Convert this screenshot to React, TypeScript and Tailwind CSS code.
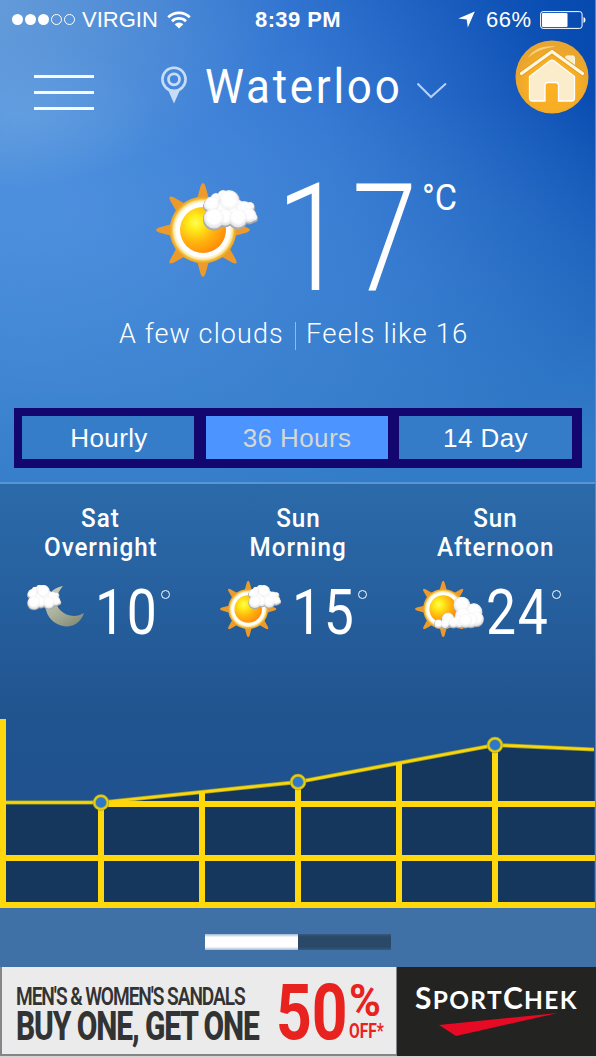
import React from "react";

const RAYS = [0, 45, 90, 135, 180, 225, 270, 315];

function Puffs({ id, puffs }: { id: string; puffs: number[][] }) {
  return (
    <g>
      {puffs.map(([x, y, r], i) => (
        <circle key={`e${i}`} cx={x} cy={y + 0.4} r={r} fill="#a9abae" />
      ))}
      {puffs.map(([x, y, r], i) => (
        <circle key={`b${i}`} cx={x} cy={y - 0.5} r={r - 1} fill="#e6e6e8" />
      ))}
      {puffs.map(([x, y, r], i) => (
        <circle key={`p${i}`} cx={x} cy={y - 0.8} r={r - 0.8} fill={`url(#${id}-puff)`} />
      ))}
    </g>
  );
}

function PuffGradient({ id }: { id: string }) {
  return (
    <radialGradient id={`${id}-puff`} cx="0.5" cy="0.44" r="0.56">
      <stop offset="0" stopColor="#ffffff" />
      <stop offset="0.6" stopColor="#ffffff" stopOpacity="0.95" />
      <stop offset="0.85" stopColor="#eeeef0" stopOpacity="0.5" />
      <stop offset="1" stopColor="#d8d9dc" stopOpacity="0.1" />
    </radialGradient>
  );
}

const SMALL_CLOUD = [
  [69, 30, 12], [80, 27, 10], [60, 17, 6], [98, 36, 4], [94, 25, 5], [52, 24, 5], [67, 14, 6],
  [56, 23, 8.5], [88, 28, 9], [93, 34, 8], [69, 36, 9], [73, 19, 11], [82, 37, 10], [58, 37, 11],
];

const BIG_CLOUD = [
  [78, 42, 14.5], [98, 53, 14.5], [102, 65, 13], [80, 60, 14], [93, 67, 12.5],
  [74, 69, 11], [84, 68, 12], [55, 65, 11], [64, 71, 9], [39, 73, 7.5], [50, 73, 8],
];

function SunIcon({ id, cloud, className }: { id: string; cloud: "small" | "big"; className: string }) {
  return (
    <svg viewBox="0 0 120 96" className={className} aria-hidden="true">
      <defs>
        <radialGradient id={`${id}-core`} cx="0.34" cy="0.34" r="0.72">
          <stop offset="0" stopColor="#fffb5a" />
          <stop offset="0.2" stopColor="#ffee1c" />
          <stop offset="0.58" stopColor="#ffb60e" />
          <stop offset="1" stopColor="#ff8a0a" />
        </radialGradient>
        <radialGradient id={`${id}-halo`}>
          <stop offset="0.8" stopColor="#fff" />
          <stop offset="0.88" stopColor="#fbe7a0" />
          <stop offset="0.94" stopColor="#f0b52c" />
          <stop offset="1" stopColor="#ec9f28" />
        </radialGradient>
        <PuffGradient id={id} />
      </defs>
      {RAYS.map((a) => (
        <path key={a} d="M39.500 22 Q42.500 12 44.600 4 Q47 -2 49.400 4 Q51.500 12 54.500 22Z" fill="#ec9a2b" transform={`rotate(${a} 47 48)`} />
      ))}
      <circle cx="47" cy="48" r="33.4" fill={`url(#${id}-halo)`} />
      <circle cx="47" cy="48" r="23" fill={`url(#${id}-core)`} />
      {cloud === "small" ? <Puffs id={id} puffs={SMALL_CLOUD} /> : <Puffs id={id} puffs={BIG_CLOUD} />}
    </svg>
  );
}

function MoonIcon({ className }: { className: string }) {
  return (
    <svg viewBox="0 0 60 46" className={className} aria-hidden="true">
      <defs>
        <linearGradient id="moon-body" x1="0" y1="0" x2="0.6" y2="1">
          <stop offset="0" stopColor="#d0d2c4" />
          <stop offset="0.6" stopColor="#abb19c" />
          <stop offset="1" stopColor="#8a927c" />
        </linearGradient>
        <PuffGradient id="moon" />
      </defs>
      <path d="M38 1 C26 3.500 18 13 21 25 C24 36.500 34 41.500 42.500 41.500 C50.500 41 56.500 35.500 59 28 C51 33 41.500 31.500 35 25 C29 18.500 31 9 38 1Z" fill="url(#moon-body)" />
      <g transform="translate(-27 -5.200) scale(0.62 0.63)">
        <Puffs id="moon" puffs={SMALL_CLOUD} />
      </g>
    </svg>
  );
}

function StatusBar() {
  return (
    <div className="flex h-[39px] items-center pl-3 pr-[9px] font-['Liberation_Sans',sans-serif] text-[22px] leading-[39px] text-white">
      <div className="flex w-[243px] items-center">
        <div className="flex w-[70px] gap-[2.6px]">
          {[1, 1, 1, 0, 0].map((on, i) => (
            <span key={i} className={on ? "size-[10.5px] rounded-full bg-white" : "size-[10.5px] rounded-full border border-white"} />
          ))}
        </div>
        <span className="w-[85px] whitespace-nowrap">VIRGIN</span>
        <svg viewBox="0 0 24 18" className="h-[18px] w-6" aria-hidden="true">
          <path d="M1.2 6.2a15.500 15.500 0 0 1 21.600 0M5 10.300a10 10 0 0 1 14 0" fill="none" stroke="#fff" strokeWidth="2.700" />
          <path d="M7.700 13.300a6 6 0 0 1 8.600 0L12 17.600Z" fill="#fff" />
        </svg>
      </div>
      <span className="w-[203px] whitespace-nowrap font-bold tracking-[0.4px]">8:39 PM</span>
      <svg viewBox="0 0 17 17" className="mr-[11px] size-[17px]" aria-hidden="true">
        <path d="M16.800 .5 9.800 16.500 8.700 8.600 .3 7.600Z" fill="#fff" />
      </svg>
      <span className="w-[54px] whitespace-nowrap tracking-[0.5px]">66%</span>
      <svg viewBox="0 0 46 18" className="h-[18px] w-[46px] shrink-0" aria-hidden="true">
        <rect x=".6" y=".6" width="41.500" height="16.800" rx="2.500" fill="none" stroke="#fff" strokeWidth="1" />
        <rect x="2" y="2" width="25.500" height="14" rx="1" fill="#fff" />
        <path d="M43.500 6q2 .6 2 3t-2 3Z" fill="#fff" />
      </svg>
    </div>
  );
}

function HomeIcon() {
  return (
    <svg viewBox="0 0 74 74" className="size-[74px]" aria-hidden="true">
      <defs>
        <radialGradient id="home-bg" cx="0.5" cy="0.6" r="0.5">
          <stop offset="0" stopColor="#fdb022" />
          <stop offset="0.7" stopColor="#f7ae25" />
          <stop offset="1" stopColor="#e9a52e" />
        </radialGradient>
      </defs>
      <circle cx="37" cy="37" r="36.500" fill="url(#home-bg)" />
      <path d="M13 18C17 10 27 5 41 6.500 29 8 21 11 13 18Z" fill="#fbd27c" />
      <path d="M50.500 20v-2.500q0-1.500 1.500-1.500h6q1.500 0 1.500 1.500V28Z" fill="#fbedc9" stroke="#fff8e4" strokeWidth="1" />
      <path d="M14.500 36.500 35 20.800q2-1.500 4 0L59.500 36.500V58q0 3-3 3H43.500V45.500q0-3-3-3h-7.500q-3 0-3 3V61H17.500q-3 0-3-3Z" fill="#fbedcb" stroke="#fff" strokeWidth="1.300" />
      <path d="M6.500 33.500 37 11.500 67.500 33.500" fill="none" stroke="#e79c1c" strokeWidth="5" strokeLinecap="round" strokeLinejoin="round" />
      <path d="M6.500 33.500 37 11.500 67.500 33.500" fill="none" stroke="#fff8e4" strokeWidth="3.200" strokeLinecap="round" strokeLinejoin="round" />
    </svg>
  );
}

function Header() {
  return (
    <header className="flex h-[91px] items-start pl-[34px]">
      <button aria-label="Menu" className="mt-9 flex w-[127px] flex-col gap-[13px]">
        <span className="h-[3px] w-[60px] bg-white/95" />
        <span className="h-[3px] w-[60px] bg-white/95" />
        <span className="h-[3px] w-[60px] bg-white/95" />
      </button>
      <svg viewBox="0 0 26 38" className="mt-[27px] h-[38px] w-[26px]" aria-hidden="true">
        <circle cx="13" cy="13.300" r="11.600" fill="none" stroke="#c7dcf6" strokeWidth="2.600" />
        <circle cx="13" cy="13.300" r="5.500" fill="none" stroke="#c7dcf6" strokeWidth="2.800" />
        <path d="M6.800 23.500q6.200 2.500 12.400 0L13 37.500Z" fill="#c7dcf6" />
      </svg>
      <h1 className="ml-[18px] mt-[19px] w-[212px] whitespace-nowrap text-[48px] leading-[58px] tracking-[3px] text-white">
        <span className="inline-block origin-left scale-x-[0.915]">Waterloo</span>
      </h1>
      <svg viewBox="0 0 32 18" className="mt-[43px] h-[18px] w-8" aria-hidden="true">
        <path d="M.5 1.500 14 15 29 1.500" fill="none" stroke="#b9d0f3" strokeWidth="2" />
      </svg>
      <div className="ml-[66px] mt-[1px]">
        <HomeIcon />
      </div>
    </header>
  );
}

function Current() {
  return (
    <section className="flex h-[278px] flex-col">
      <div className="flex h-[185px] pl-[156px] pt-[52px]">
        <SunIcon id="now" cloud="small" className="h-24 w-[120px] shrink-0" />
        <div className="mt-[-3px] flex w-[146px] shrink-0 whitespace-nowrap text-[150px] font-light leading-[121px] text-white">
          <span className="inline-block w-[76px] origin-left scale-x-[0.850]">1</span>
          <span className="inline-block w-[70px] origin-left scale-x-[0.780]">7</span>
        </div>
        <span className="whitespace-nowrap text-[36px] leading-[33px] text-white">
          <span className="inline-block origin-left scale-x-[0.950]">°C</span>
        </span>
      </div>
      <p className="flex h-[38px] items-center pl-[119px] text-[28.500px] font-[350] leading-[40px] tracking-[1.200px] text-white">
        <span className="w-[176px] whitespace-nowrap"><span className="inline-block origin-left scale-x-[0.945]">A few clouds</span></span>
        <span className="mr-[10px] mt-1 h-7 w-px bg-[#8fb9ea]" />
        <span className="whitespace-nowrap"><span className="inline-block origin-left scale-x-[0.965]">Feels like 16</span></span>
      </p>
    </section>
  );
}

function Tabs() {
  return (
    <nav className="ml-[14px] flex h-[60px] w-[568px] bg-[#13066f] pb-[9px] pl-2 pt-2 font-['Liberation_Sans',sans-serif] text-[26px] leading-[44px] tracking-[0.400px] text-white">
      <button className="w-[172px] bg-[#367dc9] pl-[2px]">Hourly</button>
      <button className="ml-3 w-[182px] bg-[#4c94ff] text-[#d3d8d3]">36 Hours</button>
      <button className="ml-[11px] w-[173px] bg-[#347bc8]">14 Day</button>
    </nav>
  );
}

const PERIODS = [
  { day: "Sat", part: "Overnight", temp: "10", icon: <MoonIcon className="h-[46px] w-[60px]" />, box: "pl-[23px]", iconBox: "w-[70px] pt-[5px]" },
  { day: "Sun", part: "Morning", temp: "15", icon: <SunIcon id="morning" cloud="small" className="h-[58px] w-[72px]" />, box: "pl-[21px]", iconBox: "w-[72px]" },
  { day: "Sun", part: "Afternoon", temp: "24", icon: <SunIcon id="afternoon" cloud="big" className="h-[58px] w-[72px]" />, box: "pl-[18px]", iconBox: "w-[71px]" },
];

function Forecast() {
  return (
    <section className="ml-[2px] grid h-[216px] w-[592px] grid-cols-3 pt-5 text-white">
      {PERIODS.map((p) => (
        <div key={p.part}>
          <div className="flex h-[76px] flex-col items-center text-[25.500px] font-medium leading-[29px] tracking-[1px]">
            <span className="scale-x-[0.950]">{p.day}</span>
            <span className="scale-x-[0.950] whitespace-nowrap">{p.part}</span>
          </div>
          <div className={`flex h-[60px] ${p.box}`}>
            <div className={`shrink-0 ${p.iconBox}`}>{p.icon}</div>
            <div className="mt-[2px] w-[66px] shrink-0 whitespace-nowrap text-[63px] font-normal leading-[62px] tracking-[2px]">
              <span className="inline-block origin-left scale-x-[0.850]">{p.temp}</span>
            </div>
            <span className="mt-[10px] size-[9px] rounded-full border-[1.500px] border-white" />
          </div>
        </div>
      ))}
    </section>
  );
}

const POINTS = [[101, 102.500], [298, 82], [495, 45]];

function Chart() {
  return (
    <svg viewBox="0 0 596 208" className="block h-[208px] w-[596px]" aria-hidden="true">
      <path d="M0 102.500H101L298 82 495 45 594 49.500V208H0Z" fill="#16375d" />
      <path d="M0 102.500H101L298 82 495 45 594 49.500" fill="none" stroke="#9da32b" strokeWidth="4.200" />
      <g fill="#fed80c">
        <rect x="0" y="19" width="6" height="189" />
        <rect x="101" y="101" width="495" height="6" />
        <rect x="0" y="155" width="596" height="6" />
        <rect x="0" y="202" width="596" height="6" />
        <rect x="98" y="103" width="6" height="102" />
        <rect x="199" y="92" width="6" height="113" />
        <rect x="295" y="82" width="6" height="123" />
        <rect x="396" y="63" width="6" height="142" />
        <rect x="492" y="45" width="6" height="160" />
      </g>
      <path d="M0 102.500H101L298 82 495 45 594 49.500" fill="none" stroke="#fbd50d" strokeWidth="2.500" />
      {POINTS.map(([x, y]) => (
        <g key={x}>
          <circle cx={x} cy={y} r="6.700" fill="#2d78ca" stroke="#a4a725" strokeWidth="3.200" />
          <circle cx={x} cy={y} r="6.700" fill="none" stroke="#e8cd17" strokeWidth="1.800" />
        </g>
      ))}
    </svg>
  );
}

function Banner() {
  return (
    <footer className="flex h-[91px] border-b-2 border-[#d5d5d5] bg-[#232321]">
      <div className="flex w-[397px] border-b-2 border-l-2 border-r border-[#85868a] bg-[#ebebeb] font-bold">
        <div className="w-[274px] shrink-0 whitespace-nowrap pl-[14px] pt-[14px] text-[#333333]">
          <div className="h-[28px] text-[26.500px] font-semibold leading-[29px] tracking-[-1.500px]">
            <span className="inline-block origin-left scale-x-[0.722]">MEN'S &amp; WOMEN'S SANDALS</span>
          </div>
          <div className="h-[34px] text-[41px] font-extrabold leading-[34px] tracking-[-1.500px]">
            <span className="inline-block origin-left scale-x-[0.730]">BUY ONE, GET ONE</span>
          </div>
        </div>
        <div className="w-[73px] shrink-0 whitespace-nowrap text-[78px] leading-[92px] text-[#e8231f]">
          <span className="inline-block w-[73px] origin-left scale-x-[0.800]">50</span>
        </div>
        <div className="whitespace-nowrap text-[#e8231f]">
          <div className="mt-[16px] h-[37px] text-[45px] leading-[35px]">
            <span className="inline-block origin-left scale-x-[0.960]">%</span>
          </div>
          <div className="text-[20.500px] leading-[22px]">
            <span className="inline-block origin-left scale-x-[0.760]">OFF*</span>
          </div>
        </div>
      </div>
      <div className="w-[198px] pl-[18px] pt-4 font-['Lato',sans-serif] text-white">
        <div className="whitespace-nowrap text-[24.500px] font-bold leading-[29px] tracking-[1.300px]">
          <span className="text-[30px]">S</span>PORT<span className="text-[30px]">C</span>HEK
        </div>
        <svg viewBox="0 0 120 24" className="ml-6 mt-[-1px] h-6 w-[120px]" aria-hidden="true">
          <path d="M0 12 119 0 17 23Z" fill="#e60a25" />
        </svg>
      </div>
    </footer>
  );
}

export default function App() {
  return (
    <main className="relative h-[1058px] w-[596px] overflow-hidden bg-[#3f70a6] font-['Roboto',sans-serif]">
      <div className="h-[484px] border-b-2 border-[#5795d4] bg-[radial-gradient(ellipse_130px_75px_at_25px_115px,rgba(125,178,232,0.3),transparent),radial-gradient(ellipse_330px_190px_at_-40px_0px,rgba(150,185,215,0.45),transparent),radial-gradient(ellipse_560px_340px_at_60px_210px,rgba(98,160,234,0.5),transparent),linear-gradient(to_bottom,transparent_20%,#327bc7_92%),linear-gradient(72deg,#3f86d8_10%,#2a6ecd_58%,#0548ae_100%)]">
        <StatusBar />
        <Header />
        <Current />
        <Tabs />
      </div>
      <div className="h-[424px] bg-[linear-gradient(to_bottom,#2b6aa9_0,#265f9e_120px,#20548f_230px,#1e508f_100%)]">
        <Forecast />
        <Chart />
      </div>
      <div className="flex h-[59px] pl-[205px] pt-[26px]">
        <span className="h-4 w-[93px] bg-[linear-gradient(to_bottom,#9fb9d4,#fff_20%,#fff_80%,#9fb9d4)]" />
        <span className="h-4 w-[93px] bg-[linear-gradient(to_bottom,#35597e,#2a4867_20%,#2a4867_80%,#35597e)]" />
      </div>
      <Banner />
      <span className="absolute right-0 top-0 h-[908px] w-px bg-[#5d8bc7]" />
    </main>
  );
}
